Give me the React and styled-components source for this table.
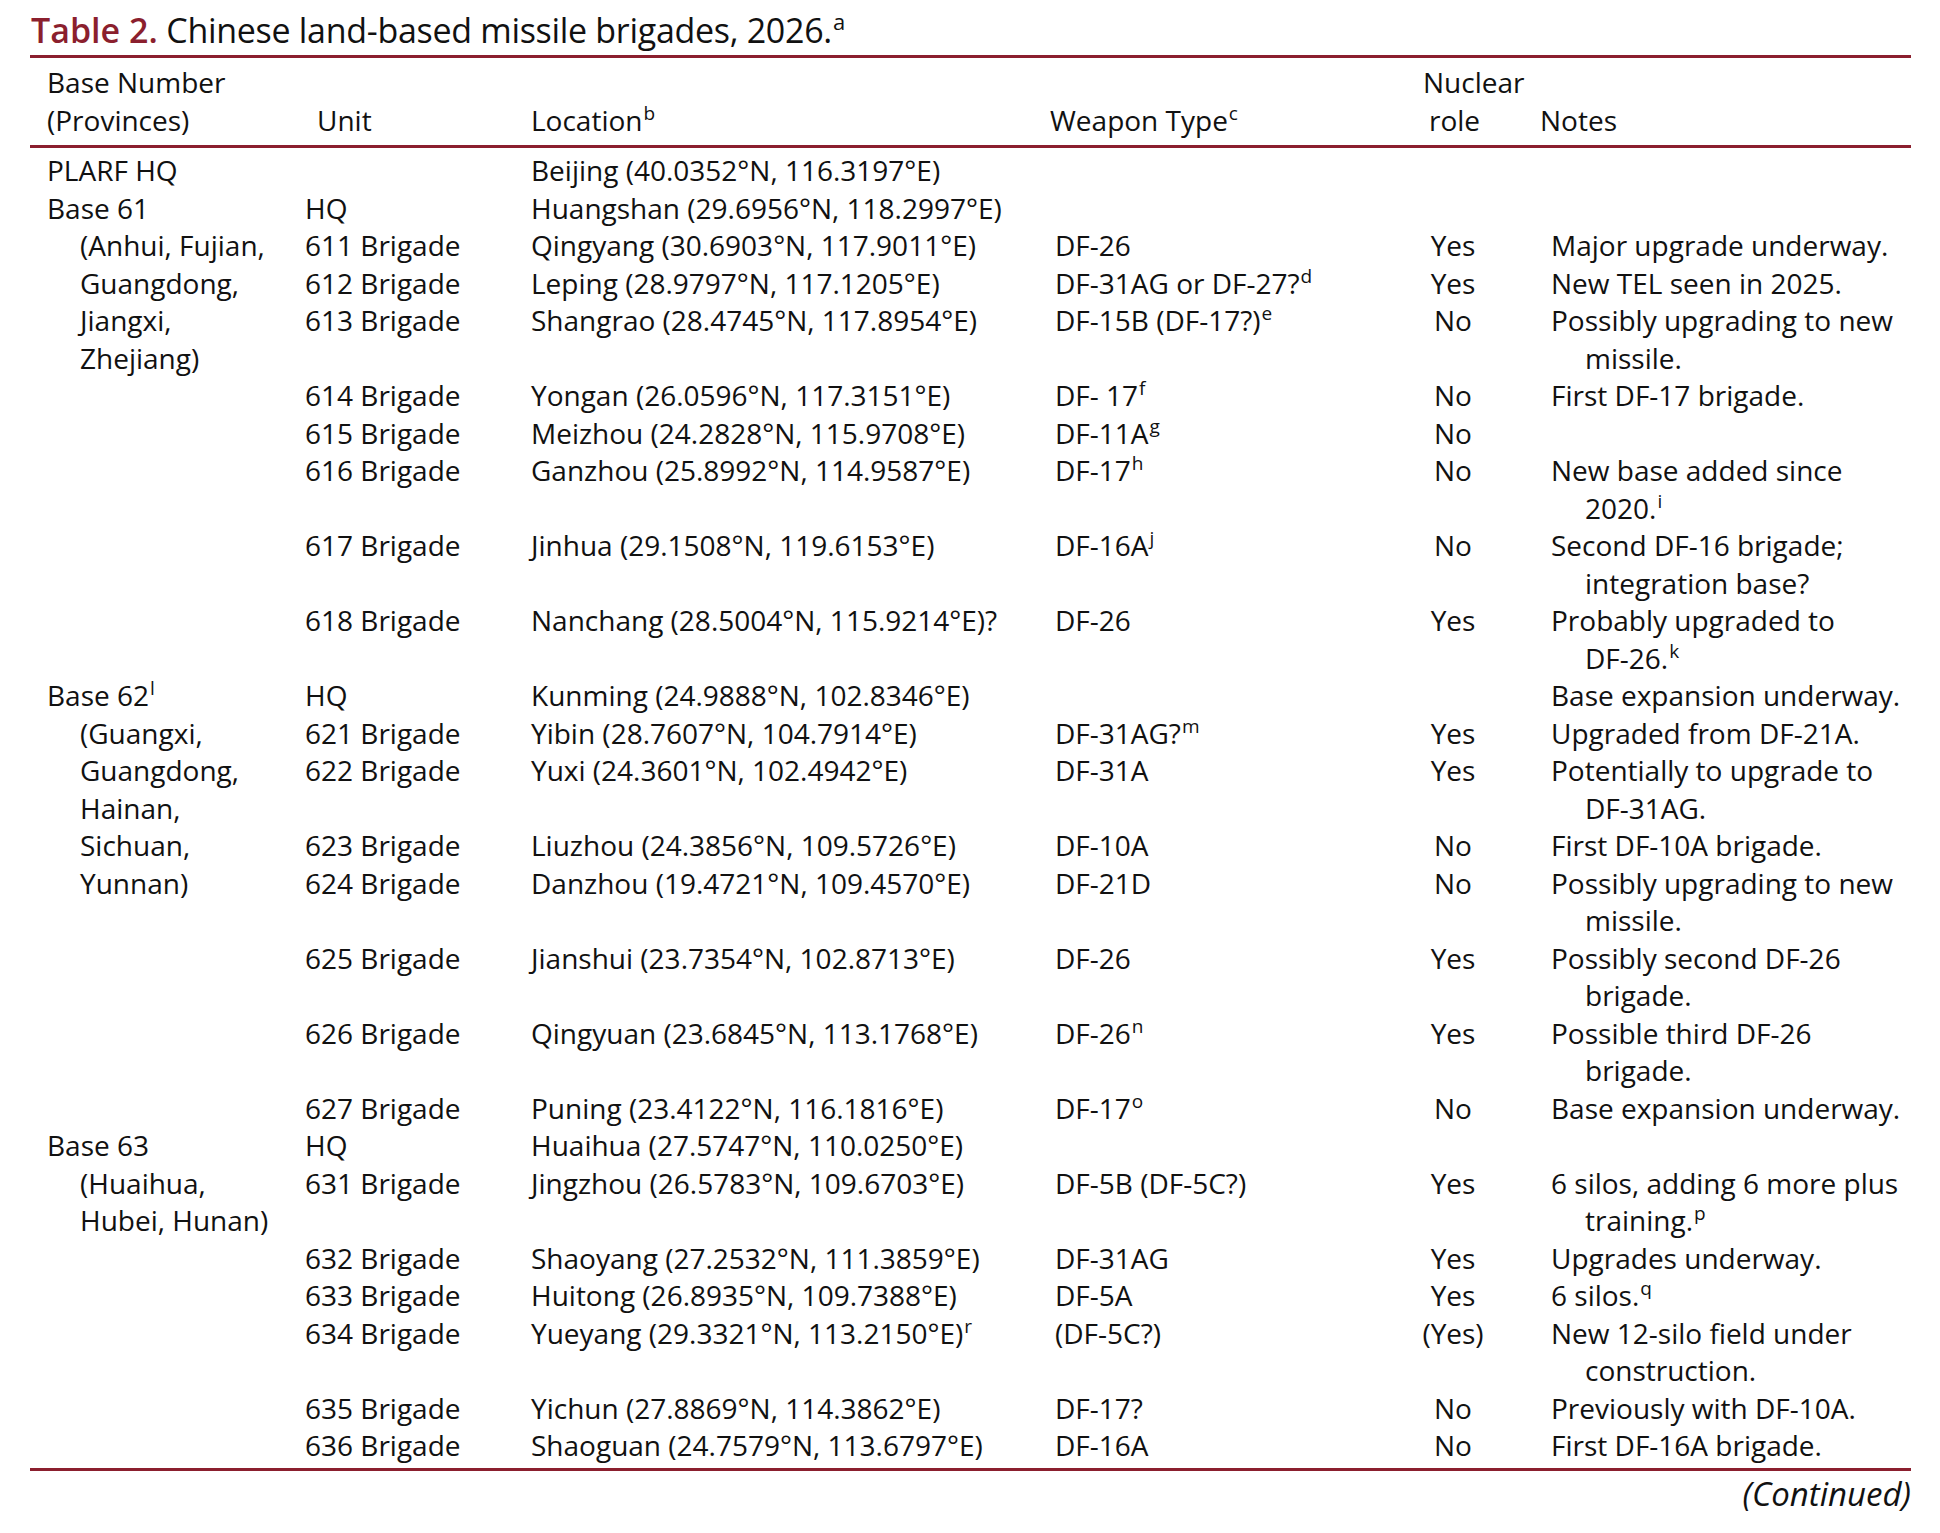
import React from 'react';
import styled, { createGlobalStyle } from 'styled-components';

const RED = '#8b1f2e';
const INK = '#111';

const Global = createGlobalStyle`
  html, body { margin: 0; padding: 0; background: #fff; }
  body { font-family: 'Open Sans', 'Noto Sans', sans-serif; color: ${INK}; }
`;

const Page = styled.div`
  width: 1940px;
  min-height: 1533px;
  box-sizing: border-box;
  padding: 10px 29px 0 30px;
  background: #fff;
`;

const Title = styled.h1`
  margin: 0 0 5px;
  padding-left: 1px;
  font-size: 34px;
  line-height: 40px;
  font-weight: 400;
  letter-spacing: -0.3px;
  color: ${INK};
  white-space: nowrap;
`;

const TitleLabel = styled.span`
  color: ${RED};
  font-weight: 600;
  letter-spacing: 0;
`;

const TitleSup = styled.sup`
  font-size: 22px;
  line-height: 0;
  vertical-align: 13px;
  margin-left: 1px;
`;

const Frame = styled.div`
  width: 1881px;
  border-top: 3px solid ${RED};
  border-bottom: 3px solid ${RED};
  padding-bottom: 3.5px;
`;

const Table = styled.table`
  width: 100%;
  table-layout: fixed;
  border-collapse: separate;
  border-spacing: 0;
  font-size: 28px;
  line-height: 37.5px;
  color: ${INK};
`;

const Head = styled.th`
  padding: 6px 0 6px ${(p) => p.$pad || 0}px;
  text-align: left;
  font-weight: 400;
  vertical-align: bottom;
  white-space: nowrap;
  border-bottom: 3px solid ${RED};
`;

const HeadLine = styled.div`
  padding-left: ${(p) => p.$indent || 0}px;
`;

const Cell = styled.td`
  padding: 0 0 0 ${(p) => p.$pad || 0}px;
  vertical-align: top;
  white-space: nowrap;
  text-align: ${(p) => (p.$center ? 'center' : 'left')};
  tbody > tr:first-child > & {
    padding-top: 4.4px;
  }
`;

const BaseName = styled.div``;

const ProvinceLine = styled.div`
  padding-left: 33px;
`;

const NoteLine = styled.div`
  padding-left: ${(p) => (p.$cont ? 34 : 0)}px;
`;

const Sup = styled.sup`
  font-size: 19px;
  line-height: 0;
  vertical-align: 11px;
  margin-left: 1px;
`;

const Continued = styled.div`
  width: 1881px;
  margin-top: 3px;
  text-align: right;
  font-style: italic;
  font-size: 33px;
  line-height: 40px;
`;

const groups = [
  {
    base: 'PLARF HQ',
    provinces: [],
    rows: [{ loc: 'Beijing (40.0352°N, 116.3197°E)' }],
  },
  {
    base: 'Base 61',
    provinces: ['(Anhui, Fujian,', 'Guangdong,', 'Jiangxi,', 'Zhejiang)'],
    rows: [
      { unit: 'HQ', loc: 'Huangshan (29.6956°N, 118.2997°E)' },
      { unit: '611 Brigade', loc: 'Qingyang (30.6903°N, 117.9011°E)', weapon: 'DF-26', nuc: 'Yes', notes: ['Major upgrade underway.'] },
      { unit: '612 Brigade', loc: 'Leping (28.9797°N, 117.1205°E)', weapon: 'DF-31AG or DF-27?', wSup: 'd', nuc: 'Yes', notes: ['New TEL seen in 2025.'] },
      { unit: '613 Brigade', loc: 'Shangrao (28.4745°N, 117.8954°E)', weapon: 'DF-15B (DF-17?)', wSup: 'e', nuc: 'No', notes: ['Possibly upgrading to new', 'missile.'] },
      { unit: '614 Brigade', loc: 'Yongan (26.0596°N, 117.3151°E)', weapon: 'DF- 17', wSup: 'f', nuc: 'No', notes: ['First DF-17 brigade.'] },
      { unit: '615 Brigade', loc: 'Meizhou (24.2828°N, 115.9708°E)', weapon: 'DF-11A', wSup: 'g', nuc: 'No' },
      { unit: '616 Brigade', loc: 'Ganzhou (25.8992°N, 114.9587°E)', weapon: 'DF-17', wSup: 'h', nuc: 'No', notes: ['New base added since', '2020.'], nSup: 'i' },
      { unit: '617 Brigade', loc: 'Jinhua (29.1508°N, 119.6153°E)', weapon: 'DF-16A', wSup: 'j', nuc: 'No', notes: ['Second DF-16 brigade;', 'integration base?'] },
      { unit: '618 Brigade', loc: 'Nanchang (28.5004°N, 115.9214°E)?', weapon: 'DF-26', nuc: 'Yes', notes: ['Probably upgraded to', 'DF-26.'], nSup: 'k' },
    ],
  },
  {
    base: 'Base 62',
    baseSup: 'l',
    provinces: ['(Guangxi,', 'Guangdong,', 'Hainan,', 'Sichuan,', 'Yunnan)'],
    rows: [
      { unit: 'HQ', loc: 'Kunming (24.9888°N, 102.8346°E)', notes: ['Base expansion underway.'] },
      { unit: '621 Brigade', loc: 'Yibin (28.7607°N, 104.7914°E)', weapon: 'DF-31AG?', wSup: 'm', nuc: 'Yes', notes: ['Upgraded from DF-21A.'] },
      { unit: '622 Brigade', loc: 'Yuxi (24.3601°N, 102.4942°E)', weapon: 'DF-31A', nuc: 'Yes', notes: ['Potentially to upgrade to', 'DF-31AG.'] },
      { unit: '623 Brigade', loc: 'Liuzhou (24.3856°N, 109.5726°E)', weapon: 'DF-10A', nuc: 'No', notes: ['First DF-10A brigade.'] },
      { unit: '624 Brigade', loc: 'Danzhou (19.4721°N, 109.4570°E)', weapon: 'DF-21D', nuc: 'No', notes: ['Possibly upgrading to new', 'missile.'] },
      { unit: '625 Brigade', loc: 'Jianshui (23.7354°N, 102.8713°E)', weapon: 'DF-26', nuc: 'Yes', notes: ['Possibly second DF-26', 'brigade.'] },
      { unit: '626 Brigade', loc: 'Qingyuan (23.6845°N, 113.1768°E)', weapon: 'DF-26', wSup: 'n', nuc: 'Yes', notes: ['Possible third DF-26', 'brigade.'] },
      { unit: '627 Brigade', loc: 'Puning (23.4122°N, 116.1816°E)', weapon: 'DF-17', wSup: 'o', nuc: 'No', notes: ['Base expansion underway.'] },
    ],
  },
  {
    base: 'Base 63',
    provinces: ['(Huaihua,', 'Hubei, Hunan)'],
    rows: [
      { unit: 'HQ', loc: 'Huaihua (27.5747°N, 110.0250°E)' },
      { unit: '631 Brigade', loc: 'Jingzhou (26.5783°N, 109.6703°E)', weapon: 'DF-5B (DF-5C?)', nuc: 'Yes', notes: ['6 silos, adding 6 more plus', 'training.'], nSup: 'p' },
      { unit: '632 Brigade', loc: 'Shaoyang (27.2532°N, 111.3859°E)', weapon: 'DF-31AG', nuc: 'Yes', notes: ['Upgrades underway.'] },
      { unit: '633 Brigade', loc: 'Huitong (26.8935°N, 109.7388°E)', weapon: 'DF-5A', nuc: 'Yes', notes: ['6 silos.'], nSup: 'q' },
      { unit: '634 Brigade', loc: 'Yueyang (29.3321°N, 113.2150°E)', lSup: 'r', weapon: '(DF-5C?)', nuc: '(Yes)', notes: ['New 12-silo field under', 'construction.'] },
      { unit: '635 Brigade', loc: 'Yichun (27.8869°N, 114.3862°E)', weapon: 'DF-17?', nuc: 'No', notes: ['Previously with DF-10A.'] },
      { unit: '636 Brigade', loc: 'Shaoguan (24.7579°N, 113.6797°E)', weapon: 'DF-16A', nuc: 'No', notes: ['First DF-16A brigade.'] },
    ],
  },
];

function Notes({ lines = [], sup }) {
  return lines.map((line, i) => (
    <NoteLine key={i} $cont={i > 0}>
      {line}
      {sup && i === lines.length - 1 ? <Sup>{sup}</Sup> : null}
    </NoteLine>
  ));
}

function GroupRows({ group }) {
  return group.rows.map((r, i) => (
    <tr key={i}>
      {i === 0 && (
        <Cell rowSpan={group.rows.length} $pad={17}>
          <BaseName>
            {group.base}
            {group.baseSup && <Sup>{group.baseSup}</Sup>}
          </BaseName>
          {group.provinces.map((p) => (
            <ProvinceLine key={p}>{p}</ProvinceLine>
          ))}
        </Cell>
      )}
      <Cell>{r.unit}</Cell>
      <Cell>
        {r.loc}
        {r.lSup && <Sup>{r.lSup}</Sup>}
      </Cell>
      <Cell $pad={5}>
        {r.weapon}
        {r.wSup && <Sup>{r.wSup}</Sup>}
      </Cell>
      <Cell $center>{r.nuc}</Cell>
      <Cell $pad={40}>
        <Notes lines={r.notes} sup={r.nSup} />
      </Cell>
    </tr>
  ));
}

export default function App() {
  return (
    <Page>
      <Global />
      <Title>
        <TitleLabel>Table 2.</TitleLabel> Chinese land-based missile brigades, 2026.
        <TitleSup>a</TitleSup>
      </Title>
      <Frame>
        <Table>
          <colgroup>
            <col style={{ width: 275 }} />
            <col style={{ width: 226 }} />
            <col style={{ width: 519 }} />
            <col style={{ width: 345 }} />
            <col style={{ width: 116 }} />
            <col style={{ width: 400 }} />
          </colgroup>
          <thead>
            <tr>
              <Head $pad={17}>
                <HeadLine>Base Number</HeadLine>
                <HeadLine>(Provinces)</HeadLine>
              </Head>
              <Head $pad={12}>Unit</Head>
              <Head>
                Location<Sup>b</Sup>
              </Head>
              <Head>
                Weapon Type<Sup>c</Sup>
              </Head>
              <Head $pad={28}>
                <HeadLine>Nuclear</HeadLine>
                <HeadLine $indent={6}>role</HeadLine>
              </Head>
              <Head $pad={29}>Notes</Head>
            </tr>
          </thead>
          <tbody>
            {groups.map((g) => (
              <GroupRows key={g.base} group={g} />
            ))}
          </tbody>
        </Table>
      </Frame>
      <Continued>(Continued)</Continued>
    </Page>
  );
}
